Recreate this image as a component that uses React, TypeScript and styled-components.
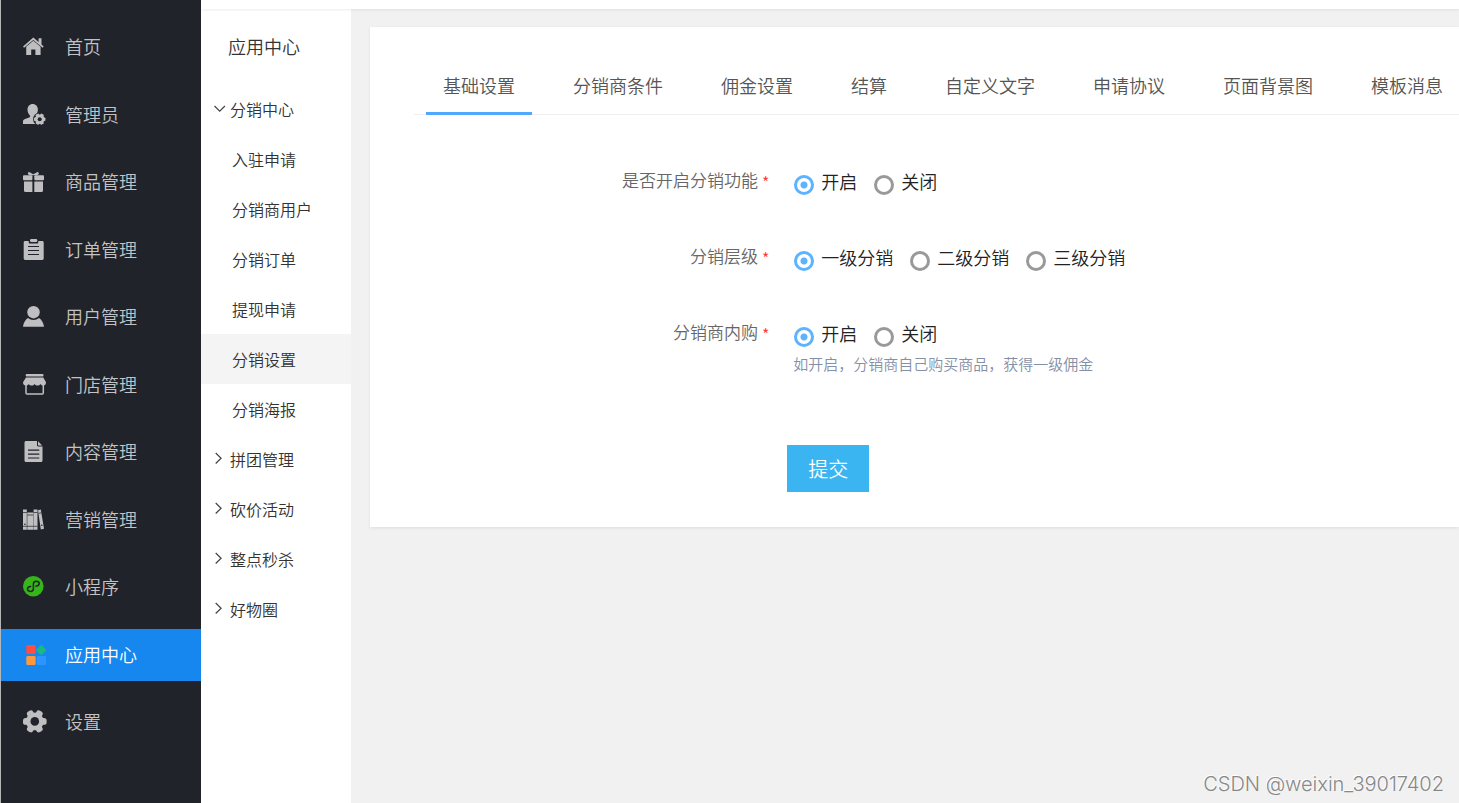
import React, { useState } from "react";
import styled, { createGlobalStyle, css } from "styled-components";

const GlobalStyle = createGlobalStyle`
  *, *::before, *::after { box-sizing: border-box; }
  body {
    margin: 0;
    background: #f1f1f1;
    color: #333;
    font-family: "Noto Sans CJK SC", "Liberation Sans", sans-serif;
    font-weight: 350;
  }
  button, input { font: inherit; }
  a { color: inherit; text-decoration: none; }
  ul { margin: 0; padding: 0; list-style: none; }
`;

const Page = styled.div`
  display: flex;
  min-height: 100vh;
  overflow: hidden;
`;

/* ---------- primary sidebar ---------- */

const Sidebar = styled.nav`
  flex: 0 0 201px;
  padding: 21px 0;
  background: #20232a;
  border-left: 1px solid #b4b6b8;
`;

const SidebarItem = styled.li`
  margin-bottom: 15px;

  &:nth-child(odd) {
    margin-bottom: 16px;
  }
`;

const SidebarLink = styled.a<{ $active?: boolean }>`
  display: flex;
  align-items: center;
  gap: 18px;
  height: 52px;
  padding-left: 22px;
  font-size: 18px;
  color: ${(p) => (p.$active ? "#fff" : "#c3c3c5")};
  background: ${(p) => (p.$active ? "#1787f0" : "transparent")};
`;

const SidebarText = styled.span`
  padding-bottom: 2px;
  line-height: 24px;
`;

const IconSvg = styled.svg`
  flex: none;
  width: 24px;
  height: 24px;
`;

const BG = "#20232a";
const FG = "#bfbfc1";

const Glyph = ({ children }: { children: React.ReactNode }) => (
  <IconSvg viewBox="0 0 24 24" fill={FG} aria-hidden="true">
    {children}
  </IconSvg>
);

const HomeIcon = () => (
  <Glyph>
    <path d="M10.300 2.600 0 11.400l1.100 1.300 9.200-7.800 9.300 7.800 1.100-1.300-2.200-1.900V3.200h-2.900v3.900z" />
    <path d="M10.300 5.700 3.200 11.800V20h5v-5.400h4.200V20h5.200v-8.200z" />
  </Glyph>
);

const AdminIcon = () => (
  <Glyph>
    <path d="M9.700 1c3 0 5.200 2.300 5.200 5.600 0 2.600-1.200 4.900-2.700 6.100v1.600c.4.400 1 .6 1.600.8v6H0v-2.600c0-1.200.8-1.900 2-2.400l4.200-1.700c.7-.3.9-.7.9-1.700-1.500-1.200-2.600-3.500-2.600-6.100C4.500 3.300 6.700 1 9.700 1z" />
    <circle cx="16.700" cy="16.200" r="6.600" fill={BG} />
    <circle cx="16.700" cy="16.200" r="4.800" />
    {[0, 60, 120].map((a) => (
      <rect key={a} x="10.900" y="14.400" width="11.600" height="3.600" rx="1" transform={`rotate(${a} 16.7 16.2)`} />
    ))}
    <circle cx="16.700" cy="16.200" r="2" fill={BG} />
  </Glyph>
);

const GiftIcon = () => (
  <Glyph>
    <path d="M5.700 1.700 10.300 4.300 15 1.700l1 2.300-2 1.300H6.700l-2-1.300z" />
    <rect x="0" y="5.300" width="9.400" height="5" rx="1" />
    <rect x="11.300" y="5.300" width="9.700" height="5" rx="1" />
    <path d="M1 11.500h8.400V22H2.500A1.500 1.500 0 0 1 1 20.500zM11.300 11.500H20v9a1.500 1.500 0 0 1-1.500 1.500h-7.200z" />
  </Glyph>
);

const OrderIcon = () => (
  <Glyph>
    <path d="M2 3h3.700v1.300c0 .8.500 1.200 1.200 1.200h7.200c.7 0 1.200-.4 1.200-1.200V3H19.300c.8 0 1.400.6 1.400 1.400v16.200c0 .8-.6 1.400-1.400 1.400H2.100c-.8 0-1.400-.6-1.400-1.400V4.400C.7 3.600 1.300 3 2 3z" />
    <rect x="7" y="1" width="7.300" height="3" rx="1.300" />
    <path d="M5 8.500h11M5 12.500h11M5 16.500h11" stroke={BG} strokeWidth="1.200" />
  </Glyph>
);

const UserIcon = () => (
  <Glyph>
    <circle cx="10.500" cy="7.200" r="6.200" />
    <path d="M5 13c1.500 1.300 3.300 2 5.500 2s4-.7 5.500-2c2.800 1.800 4.600 5 5 8.700H0C.4 18 2.200 14.800 5 13z" />
  </Glyph>
);

const StoreIcon = () => (
  <Glyph>
    <rect x="2.700" y="1" width="17.800" height="2.400" rx="1" />
    <path d="M3 4.600h17.300L23 9.300c0 2-1 3.300-2.700 3.300-1.200 0-2.100-.6-2.900-1.700-.7 1.100-1.700 1.700-2.900 1.700s-2.200-.6-2.900-1.700c-.8 1.100-1.700 1.700-2.900 1.700s-2.200-.6-2.900-1.700c-.8 1.100-1.700 1.700-2.900 1.700C1 12.600 0 11.300 0 9.300z" />
    <path d="M3 11v8.900c0 .6.400 1 1 1h15.300c.6 0 1-.4 1-1V11" fill="none" stroke={FG} strokeWidth="1.500" />
  </Glyph>
);

const DocIcon = () => (
  <Glyph>
    <path d="M3 1h11v4.300c0 .7.400 1.200 1.100 1.200h4.400v14c0 .8-.6 1.500-1.500 1.500H3c-.8 0-1.500-.7-1.500-1.500v-18C1.500 1.700 2.200 1 3 1z" />
    <path d="M15 1.300 19.200 5.500H15z" />
    <path d="M5 10.200h11.300M5 14.200h11.300M5 18h11.300" stroke={BG} strokeWidth="1.200" />
  </Glyph>
);

const BooksIcon = () => (
  <Glyph>
    <path d="M0 1.500h3.800v20.200H0zM4.300 4.600h6v17.100h-6zM10.600 1.500h3.900v20.200h-3.900zM15 2.200 17.800 1.500 21 20.800l-3.200.8z" />
    <path d="M0 4.500h3.800M4.300 7h6M10.600 4.500h3.900M0 18.300h14.500M15.600 5.400l2.800-.6" stroke={BG} strokeWidth=".7" />
    <circle cx="1.900" cy="16.300" r=".8" fill={BG} />
    <circle cx="18.800" cy="17.300" r=".8" fill={BG} />
  </Glyph>
);

const MiniProgramIcon = () => (
  <Glyph>
    <circle cx="10.300" cy="11.300" r="10.300" fill="#35b519" />
    <path
      d="M12.900 11.300c2-.2 3.300-1.200 3.300-2.700 0-1.400-1.200-2.300-2.800-2.300-1.800 0-3 1.100-3 2.700v4.800c0 1.600-1.300 2.600-3 2.600s-2.900-.9-2.900-2.300c0-1.500 1.300-2.500 3.200-2.700"
      fill="none"
      stroke={BG}
      strokeWidth="1.500"
      strokeLinecap="round"
    />
  </Glyph>
);

const AppsIcon = () => (
  <Glyph>
    <rect x="3.300" y="2" width="9.300" height="9" rx="1.300" fill="#ff4d43" />
    <rect x="14.500" y="3.300" width="7.600" height="7.600" rx="1" fill="#1bb884" transform="rotate(45 18.300 7.100)" />
    <rect x="3.300" y="13" width="9.300" height="9" rx="1.300" fill="#ff973c" />
    <rect x="13.800" y="13" width="9.300" height="9" rx="1.300" fill="#2d95ff" />
  </Glyph>
);

const GearIcon = () => (
  <Glyph>
    <circle cx="11.800" cy="11.400" r="8.900" />
    {[0, 60, 120].map((a) => (
      <rect key={a} x="0" y="8" width="23.600" height="6.800" rx="2.600" transform={`rotate(${a} 11.8 11.4)`} />
    ))}
    <circle cx="11.800" cy="11.400" r="4.300" fill={BG} />
  </Glyph>
);

const sidebarItems = [
  { label: "首页", Icon: HomeIcon },
  { label: "管理员", Icon: AdminIcon },
  { label: "商品管理", Icon: GiftIcon },
  { label: "订单管理", Icon: OrderIcon },
  { label: "用户管理", Icon: UserIcon },
  { label: "门店管理", Icon: StoreIcon },
  { label: "内容管理", Icon: DocIcon },
  { label: "营销管理", Icon: BooksIcon },
  { label: "小程序", Icon: MiniProgramIcon },
  { label: "应用中心", Icon: AppsIcon, active: true },
  { label: "设置", Icon: GearIcon },
];

/* ---------- workspace ---------- */

const Workspace = styled.div`
  flex: 1;
  min-width: 0;
  display: flex;
  flex-direction: column;
`;

const TopBar = styled.header`
  position: relative;
  height: 9px;
  background: #fff;
  box-shadow: 0 1px 3px rgba(0, 0, 0, 0.08);
`;

const Body = styled.div`
  flex: 1;
  display: flex;
`;

const SubMenu = styled.nav`
  flex: 0 0 150px;
  background: #fff;
`;

const SubMenuTitle = styled.h2`
  margin: 0;
  padding-left: 27px;
  font-size: 18px;
  font-weight: inherit;
  line-height: 75px;
`;

const menuRow = css`
  display: flex;
  align-items: center;
  width: 100%;
  height: 50px;
  font-size: 16px;
  line-height: 24px;
  color: #333;
`;

const GroupButton = styled.button`
  ${menuRow}
  gap: 4px;
  padding: 0 0 0 13px;
  border: 0;
  background: none;
  text-align: left;
  cursor: pointer;
`;

const ChildLink = styled.a<{ $active?: boolean }>`
  ${menuRow}
  padding-left: 31px;
  background: ${(p) => (p.$active ? "#f4f4f4" : "transparent")};
`;

const ChevronSvg = styled.svg`
  flex: none;
  width: 12px;
  height: 16px;
`;

const Chevron = ({ open }: { open: boolean }) => (
  <ChevronSvg viewBox="0 0 12 16" fill="none" stroke="#444" strokeWidth="1.200" aria-hidden="true">
    <path d={open ? "M.5 5 5.700 10.200l5.200-5.200" : "M1.700 2l5.400 5.200L1.700 12.500"} />
  </ChevronSvg>
);

const menuGroups = [
  {
    label: "分销中心",
    children: ["入驻申请", "分销商用户", "分销订单", "提现申请", "分销设置", "分销海报"],
  },
  { label: "拼团管理", children: [] },
  { label: "砍价活动", children: [] },
  { label: "整点秒杀", children: [] },
  { label: "好物圈", children: [] },
];

const Content = styled.main`
  flex: 1;
  min-width: 0;
  padding: 18px 0 18px 19px;
`;

const Card = styled.section`
  padding: 34px 0 35px 44px;
  background: #fff;
  box-shadow: 0 1px 3px rgba(0, 0, 0, 0.08);
`;

const TabList = styled.div`
  display: flex;
  gap: 24px;
  padding-left: 12px;
  border-bottom: 1px solid #eee;
`;

const Tab = styled.button<{ $active: boolean }>`
  flex: none;
  height: 54px;
  margin-bottom: -1px;
  padding: 0 17px 4px;
  border: 0;
  border-bottom: 3px solid ${(p) => (p.$active ? "#50a9fd" : "transparent")};
  background: none;
  font-size: 18px;
  line-height: 24px;
  color: #555;
  white-space: nowrap;
  cursor: pointer;
`;

const tabs = ["基础设置", "分销商条件", "佣金设置", "结算", "自定义文字", "申请协议", "页面背景图", "模板消息"];

const Form = styled.form`
  padding-top: 50px;
`;

const Field = styled.div`
  display: grid;
  grid-template-columns: 34% 1fr;
  column-gap: 24px;
  min-height: 76px;
`;

const FieldLabel = styled.div`
  font-size: 17px;
  line-height: 30px;
  text-align: right;
  color: #666;
`;

const Required = styled.span`
  margin-left: 4px;
  font-size: 16px;
  line-height: 16px;
  vertical-align: -2px;
  color: #f33;
`;

const Options = styled.div`
  display: flex;
  flex-wrap: wrap;
  gap: 16px;
`;

const Option = styled.label`
  display: flex;
  align-items: center;
  gap: 7px;
  font-size: 18px;
  line-height: 32px;
  color: #222;
`;

const Radio = styled.input`
  appearance: none;
  flex: none;
  width: 20px;
  height: 20px;
  margin: 7px 0 0 1px;
  border: 3px solid #999;
  border-radius: 50%;
  background: #fff;

  &:checked {
    border-color: #5cb3ff;
    background: radial-gradient(circle, #5cb3ff 3px, #fff 4px);
  }
`;

const Hint = styled.p`
  margin: 0;
  font-size: 15px;
  line-height: 30px;
  color: #8590a6;
`;

const Actions = styled.div`
  display: grid;
  grid-template-columns: 34% max-content;
  column-gap: 18px;
  padding-top: 52px;
`;

const Submit = styled.button`
  grid-column: 2;
  height: 47px;
  padding: 0 21px;
  border: 0;
  background: #3bb4f2;
  color: #fff;
  font-size: 20px;
  line-height: 47px;
  cursor: pointer;
`;

const Watermark = styled.div`
  position: absolute;
  right: 15px;
  bottom: 6px;
  font-family: Inter, "Liberation Sans", sans-serif;
  font-weight: 300;
  font-size: 20px;
  line-height: 26px;
  color: #888;
  text-shadow: -1px -1px 0 #fff;
`;

const Viewport = styled.div`
  position: relative;
`;

const fields = [
  { name: "enabled", label: "是否开启分销功能", options: ["开启", "关闭"] },
  { name: "level", label: "分销层级", options: ["一级分销", "二级分销", "三级分销"] },
  {
    name: "selfBuy",
    label: "分销商内购",
    options: ["开启", "关闭"],
    hint: "如开启，分销商自己购买商品，获得一级佣金",
  },
];

export default function App() {
  const [tab, setTab] = useState(0);
  const [openGroup, setOpenGroup] = useState(0);

  return (
    <Viewport>
      <GlobalStyle />
      <Page>
        <Sidebar>
          <ul>
            {sidebarItems.map(({ label, Icon, active }) => (
              <SidebarItem key={label}>
                <SidebarLink href="#" $active={active}>
                  <Icon />
                  <SidebarText>{label}</SidebarText>
                </SidebarLink>
              </SidebarItem>
            ))}
          </ul>
        </Sidebar>
        <Workspace>
          <TopBar />
          <Body>
            <SubMenu>
              <SubMenuTitle>应用中心</SubMenuTitle>
              {menuGroups.map((group, i) => (
                <React.Fragment key={group.label}>
                  <GroupButton
                    type="button"
                    aria-expanded={openGroup === i}
                    onClick={() => setOpenGroup(openGroup === i ? -1 : i)}
                  >
                    <Chevron open={openGroup === i} />
                    {group.label}
                  </GroupButton>
                  {openGroup === i &&
                    group.children.map((child) => (
                      <ChildLink key={child} href="#" $active={child === "分销设置"}>
                        {child}
                      </ChildLink>
                    ))}
                </React.Fragment>
              ))}
            </SubMenu>
            <Content>
              <Card>
                <TabList role="tablist">
                  {tabs.map((label, i) => (
                    <Tab
                      key={label}
                      type="button"
                      role="tab"
                      aria-selected={tab === i}
                      $active={tab === i}
                      onClick={() => setTab(i)}
                    >
                      {label}
                    </Tab>
                  ))}
                </TabList>
                <Form onSubmit={(e) => e.preventDefault()}>
                  {fields.map((field) => (
                    <Field key={field.name} role="radiogroup" aria-labelledby={`${field.name}-label`}>
                      <FieldLabel id={`${field.name}-label`}>
                        {field.label}
                        <Required>*</Required>
                      </FieldLabel>
                      <div>
                        <Options>
                          {field.options.map((option, i) => (
                            <Option key={option}>
                              <Radio type="radio" name={field.name} defaultChecked={i === 0} />
                              {option}
                            </Option>
                          ))}
                        </Options>
                        {field.hint && <Hint>{field.hint}</Hint>}
                      </div>
                    </Field>
                  ))}
                  <Actions>
                    <Submit type="submit">提交</Submit>
                  </Actions>
                </Form>
              </Card>
            </Content>
          </Body>
        </Workspace>
      </Page>
      <Watermark>CSDN @weixin_39017402</Watermark>
    </Viewport>
  );
}
